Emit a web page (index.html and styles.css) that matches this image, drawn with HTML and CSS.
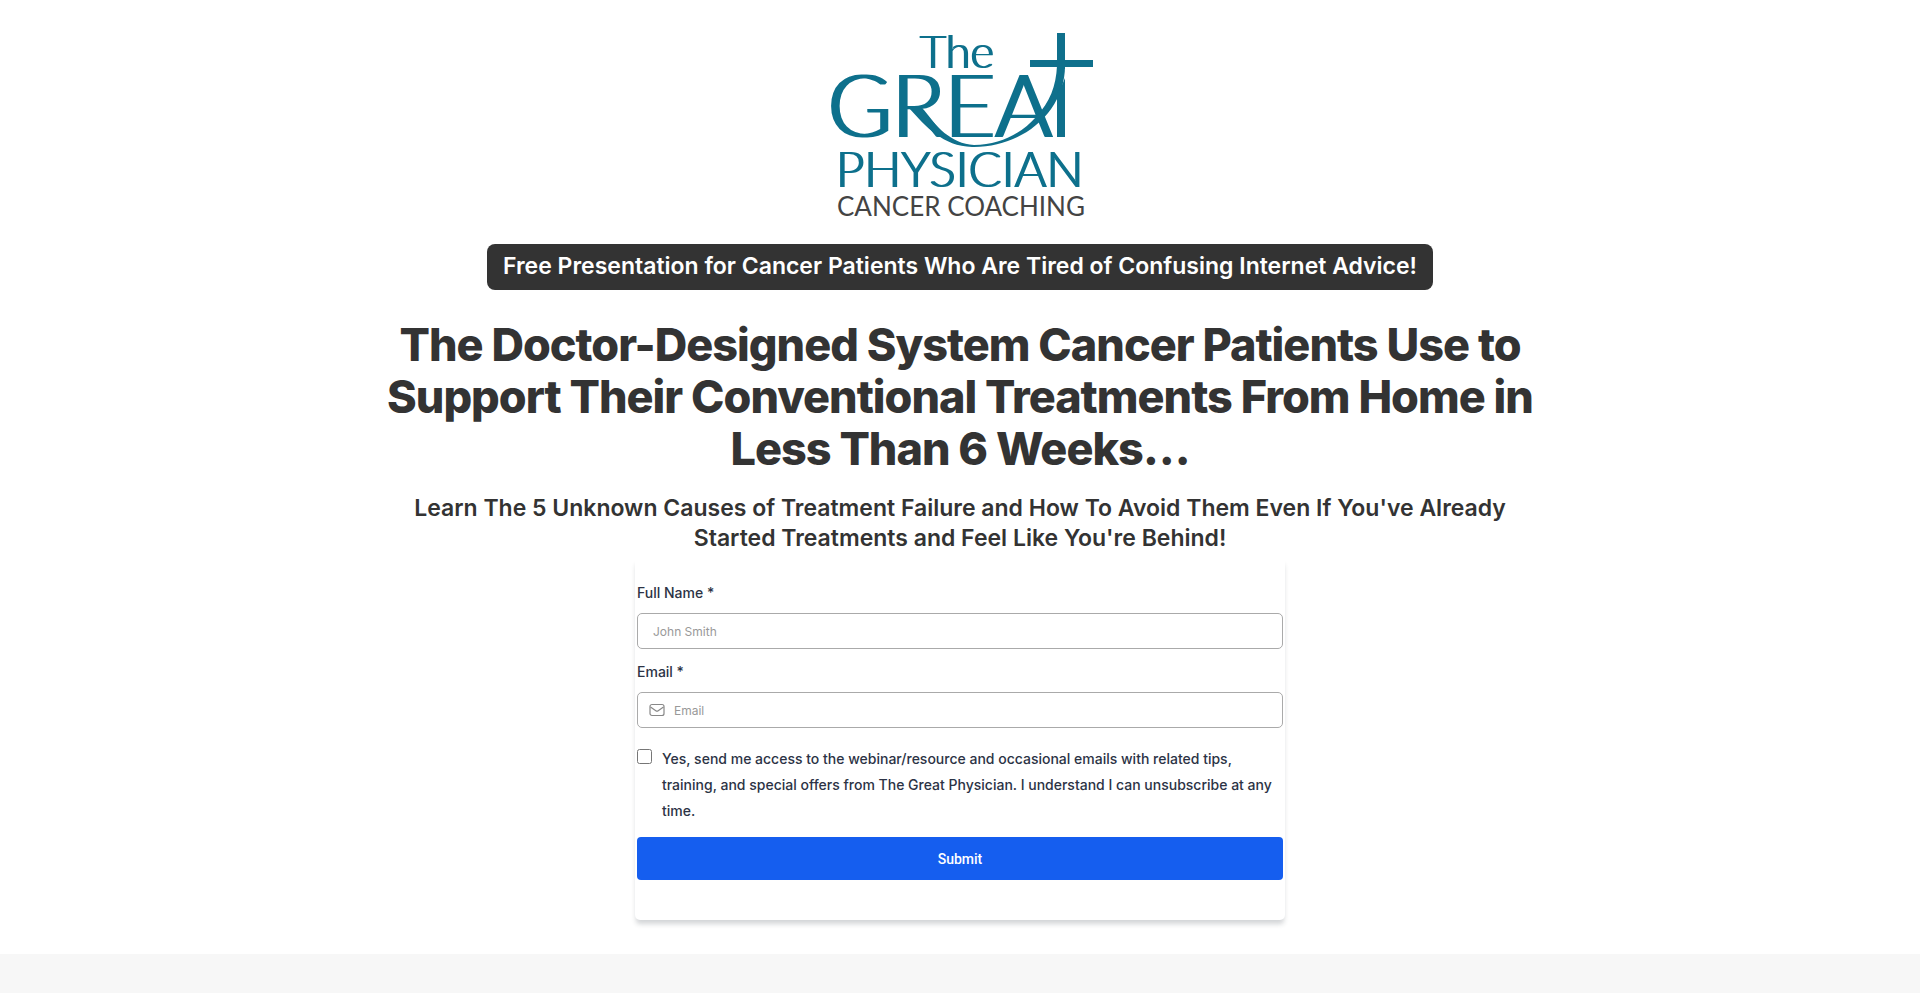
FILE: index.html
```html
<!DOCTYPE html>
<html lang="en">
<head>
  <meta charset="UTF-8">
  <meta name="viewport" content="width=device-width, initial-scale=1">
  <title>The Great Physician Cancer Coaching</title>
  <link rel="stylesheet" href="styles.css">
</head>
<body>

  <!-- Hero -->
  <section class="hero">
    <svg class="logo" viewBox="0 0 300 210" role="img" aria-label="The Great Physician Cancer Coaching">
      <defs>
        <!-- Thicken the upright strokes only -->
        <filter id="stems-lg" x="-5%" width="110%"><feMorphology operator="dilate" radius="2 0"/></filter>
        <filter id="stems-sm" x="-5%" width="110%"><feMorphology operator="dilate" radius="1 0"/></filter>
      </defs>
      <g class="logo-teal">
        <text x="110" y="48" font-size="45" filter="url(#stems-sm)">The</text>
        <text x="18" y="117" font-size="87" filter="url(#stems-lg)">GREA</text>
        <text x="26" y="167" font-size="49" filter="url(#stems-sm)">PHYSICIAN</text>
        <!-- Cross and swoosh -->
        <path d="M247 13h8v27h28v7h-28v2h-8v-2h-27v-7h27z"/>
        <path d="M247 46h8C255 92 212 128 162 127C133 126 116 107 99 88H111C126 106 141 124 164 125C190 125 212 113 226 97C240 82 246 66 247 46z"/>
        <path d="M247 73C251 68 253 63 255 58V117h-8z"/>
      </g>
      <text class="logo-grey" x="27" y="196" font-size="26">CANCER COACHING</text>
    </svg>

    <p class="badge">Free Presentation for Cancer Patients Who Are Tired of Confusing Internet Advice!</p>

    <h1>The Doctor-Designed System Cancer Patients Use to Support Their Conventional Treatments From Home in Less Than 6 Weeks…</h1>
    <h2>Learn The 5 Unknown Causes of Treatment Failure and How To Avoid Them Even If You've Already Started Treatments and Feel Like You're Behind!</h2>

    <!-- Opt-in Form -->
    <form class="optin-form">
      <label class="field-label" for="name">Full Name *</label>
      <div class="field">
        <input type="text" id="name" placeholder="John Smith">
      </div>

      <label class="field-label" for="email">Email *</label>
      <div class="field">
        <svg class="mail-icon" viewBox="0 0 16 16" aria-hidden="true">
          <rect x="1" y="2.500" width="14" height="11" rx="2"/>
          <path d="M1.500 5l5.300 3.700a2 2 0 0 0 2.400 0L14.500 5"/>
        </svg>
        <input type="email" id="email" placeholder="Email">
      </div>

      <div class="consent">
        <input type="checkbox" id="consent">
        <label for="consent">Yes, send me access to the webinar/resource and occasional emails with related tips, training, and special offers from The Great Physician. I understand I can unsubscribe at any time.</label>
      </div>

      <button class="submit-btn" type="submit">Submit</button>
    </form>
  </section>

  <section class="next-section"></section>

</body>
</html>
```
FILE: styles.css
```css
/* Global Styling */
* {
  box-sizing: border-box;
}
body {
  margin: 0;
  font-family: Inter, sans-serif;
  background: #fff;
  color: #333;
}

/* Hero */
.hero {
  display: flex;
  flex-direction: column;
  align-items: center;
  max-width: 1170px;
  margin: 0 auto;
  padding: 20px 10px 34px;
  text-align: center;
}

/* Logo */
.logo {
  width: 300px;
  height: 210px;
}
.logo text {
  font-family: Lato, sans-serif;
}
.logo-teal {
  fill: #0f708c;
}
.logo-teal text {
  font-weight: 300;
}
.logo-grey {
  fill: #444;
}

.badge {
  margin: 14px 0 0;
  padding: 7px 16px 9px;
  background: #333;
  border-radius: 8px;
  color: #fff;
  font-size: 23px;
  font-weight: 600;
  line-height: 30px;
}
h1 {
  margin: 29px 0 0;
  font-size: 45px;
  font-weight: 800;
  line-height: 52px;
  letter-spacing: -1px;
}
h2 {
  margin: 18px 0 0;
  font-size: 23px;
  font-weight: 600;
  line-height: 30px;
}

/* Opt-in Form */
.optin-form {
  width: 100%;
  max-width: 650px;
  margin-top: 5px;
  padding: 24px 2px 40px;
  border-radius: 5px;
  box-shadow: 0 5px 5px -1px rgba(33, 43, 54, 0.2);
  clip-path: inset(0 -10px -15px);
  color: #2c3345;
  text-align: left;
}
.field-label {
  display: block;
  margin-bottom: 10px;
  font-size: 14px;
  font-weight: 500;
  line-height: 21px;
}
.field {
  display: flex;
  align-items: center;
  height: 36px;
  margin-bottom: 12px;
  padding: 0 11px;
  border: 1px solid #aaa;
  border-radius: 5px;
}
.field input {
  flex: 1;
  padding: 0 4px;
  border: none;
  outline: none;
  background: none;
  font-family: inherit;
  font-size: 12px;
}
.field input::placeholder {
  color: #999;
}
.mail-icon {
  width: 16px;
  height: 16px;
  margin-right: 5px;
  fill: none;
  stroke: #888;
  stroke-width: 1.2;
}
.consent {
  display: flex;
  gap: 10px;
  align-items: flex-start;
  margin: 18px 0 13px;
  font-size: 14px;
  font-weight: 500;
  line-height: 26px;
}
.consent input {
  flex: none;
  width: 15px;
  height: 15px;
  margin: 3px 0 0;
}
.submit-btn {
  width: 100%;
  height: 43px;
  border: none;
  border-radius: 4px;
  background: #155eef;
  color: #fff;
  font-family: Roboto, sans-serif;
  font-size: 14px;
  font-weight: 500;
  cursor: pointer;
}

/* Next Section */
.next-section {
  min-height: 39px;
  background: #f7f7f7;
}
```
